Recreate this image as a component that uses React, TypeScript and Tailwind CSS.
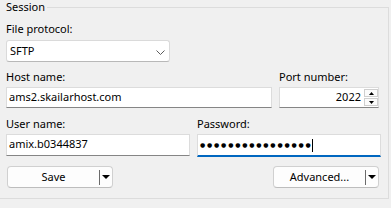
import React from "react";

function DropButton({ label }: { label: string }) {
  return (
    <div className="flex h-[22px] w-[106px] items-center rounded-[4px] border border-[#d0d0d0] border-b-[#bdbdbd] bg-[#fdfdfd]">
      <span className="flex-1 text-center">{label}</span>
      <span className="h-[15px] w-px bg-[#6b6b6b]" />
      <span className="flex w-[12px] justify-center">
        <svg width="8" height="4" viewBox="0 0 8 4">
          <path d="M0 0 L8 0 L4 4 Z" fill="#000" />
        </svg>
      </span>
    </div>
  );
}

function SpinBox({ up }: { up: boolean }) {
  return (
    <div className="flex h-[8px] w-[14px] items-center justify-center border border-[#cfcfcf] bg-[#fbfbfb]">
      <svg width="5" height="3" viewBox="0 0 5 3">
        {up ? <path d="M2.5 0 L5 3 L0 3 Z" fill="#000" /> : <path d="M0 0 L5 0 L2.5 3 Z" fill="#000" />}
      </svg>
    </div>
  );
}

export default function App() {
  return (
    <div className="h-[208px] w-[391px] overflow-hidden bg-[#f0f0f0] pt-[7px] font-['Noto_Sans',sans-serif] text-[11px] leading-[14px] text-black">
      <div className="relative h-[192px] w-[389px] border-b border-r border-t border-[#dcdcdc]">
        <span className="absolute left-0 top-[-8px] bg-[#f0f0f0] pl-[6px] pr-[2px]">Session</span>
        <div className="flex flex-col pl-[6px] pt-[14px]">
          <div>File protocol:</div>
          <div className="mt-[4px] flex h-[22px] w-[164px] items-start justify-between rounded-[3px] border border-[#dadada] border-b-[#b8b8b8] bg-white pl-[3px] pr-[4px] pt-[3px]">
            <span>SFTP</span>
            <svg className="mt-[6px]" width="9" height="5" viewBox="0 0 9 5">
              <path d="M0.5 0.5 L4.5 4.5 L8.5 0.5" fill="none" stroke="#5c5c5c" strokeWidth="1" />
            </svg>
          </div>

          <div className="mt-[8px] flex gap-[7px]">
            <div className="flex w-[266px] flex-col">
              <div>Host name:</div>
              <div className="mt-[3px] h-[21px] border border-[#dcdcdc] border-b-[#858585] bg-white px-[2px] pt-[2px]">
                ams2.skailarhost.com
              </div>
            </div>
            <div className="flex w-[100px] flex-col">
              <div>Port number:</div>
              <div className="mt-[3px] flex h-[21px] items-start border border-[#dcdcdc] border-b-[#858585] bg-white">
                <span className="flex-1 pr-[3px] pt-[2px] text-right">2022</span>
                <div className="flex flex-col gap-[1px] pt-[1px]">
                  <SpinBox up={true} />
                  <SpinBox up={false} />
                </div>
              </div>
            </div>
          </div>

          <div className="mt-[9px] flex items-start gap-[7px]">
            <div className="flex w-[184px] flex-col">
              <div>User name:</div>
              <div className="mt-[3px] h-[22px] border border-[#dcdcdc] border-b-[#858585] bg-white px-[2px] pt-[2px]">
                amix.b0344837
              </div>
            </div>
            <div className="flex w-[184px] flex-col">
              <div>Password:</div>
              <div className="mt-[3px] flex h-[23px] items-center border border-b-2 border-[#dcdcdc] border-b-[#0067c0] bg-white pl-[2px]">
                <span className="font-['DejaVu_Sans',sans-serif] text-[6px] leading-[14px] tracking-[1.8px]">
                  ●●●●●●●●●●●●●●●●
                </span>
                <span className="ml-[-1px] h-[13px] w-px bg-black" />
              </div>
            </div>
          </div>

          <div className="ml-[1px] mt-[9px] flex w-[372px] justify-between">
            <DropButton label="Save" />
            <DropButton label="Advanced..." />
          </div>
        </div>
      </div>
    </div>
  );
}
